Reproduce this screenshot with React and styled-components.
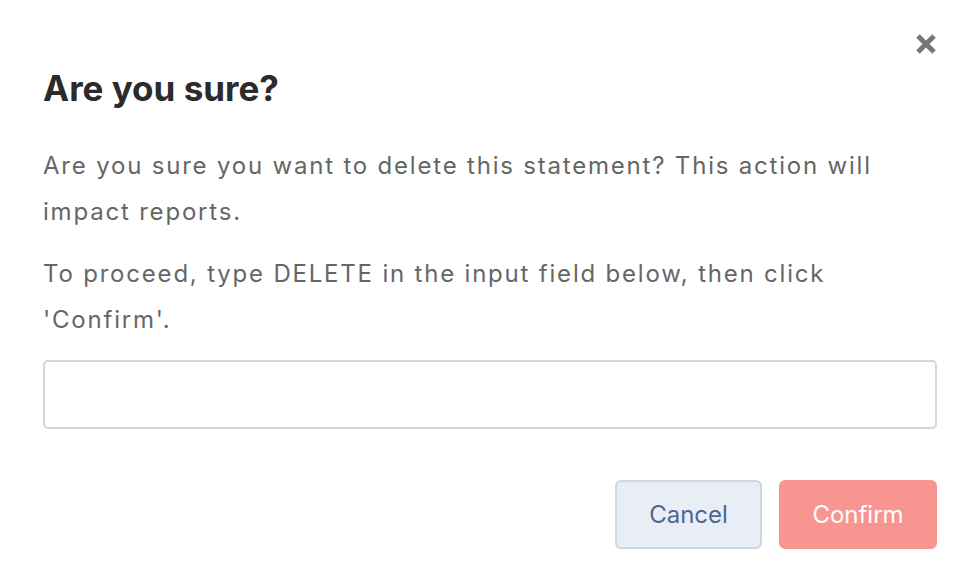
import React from "react"
import styled, { createGlobalStyle } from "styled-components"

const GlobalStyle = createGlobalStyle`
  html, body {
    margin: 0;
    padding: 0;
    background: #ffffff;
  }
  body {
    font-family: Inter, "Liberation Sans", Arial, sans-serif;
  }
  * {
    box-sizing: border-box;
  }
`

const Modal = styled.div`
  position: relative;
  width: 970px;
  height: 578px;
  padding: 66px 33px 0 43px;
  background: #ffffff;
`

const CloseButton = styled.button`
  position: absolute;
  top: 32px;
  right: 32px;
  width: 24px;
  height: 24px;
  padding: 0;
  border: none;
  background: transparent;
  cursor: pointer;
  display: flex;
  align-items: center;
  justify-content: center;
`

const Title = styled.h2`
  margin: 0 0 33px;
  font-size: 35px;
  line-height: 44px;
  font-weight: 700;
  color: #2b2b2b;
`

const Text = styled.p`
  margin: 0 0 16px;
  font-size: 24px;
  line-height: 46px;
  letter-spacing: 1.8px;
  color: #666666;
`

const Input = styled.input`
  display: block;
  width: 100%;
  height: 69px;
  margin-top: 17px;
  border: 2px solid #d6d6d6;
  border-radius: 5px;
  padding: 0 16px;
  font-size: 24px;
  font-family: inherit;
  outline: none;
`

const Actions = styled.div`
  display: flex;
  justify-content: flex-end;
  gap: 17px;
  margin-top: 51px;
`

const Button = styled.button`
  height: 69px;
  padding: 0;
  width: ${p => p.$width}px;
  border-radius: 6px;
  font-family: inherit;
  font-size: 24px;
  cursor: pointer;
  border: 2px solid ${p => (p.$primary ? "#f99590" : "#cdd7e3")};
  background: ${p => (p.$primary ? "#f99590" : "#e9eef6")};
  color: ${p => (p.$primary ? "#ffffff" : "#4b6891")};
`

const App = () => (
  <>
    <GlobalStyle />
    <Modal>
      <CloseButton aria-label="Close">
        <svg width="22" height="22" viewBox="0 0 22 22">
          <path
            d="M3 3 L19 19 M19 3 L3 19"
            stroke="#777777"
            strokeWidth="5"
            strokeLinecap="butt"
          />
        </svg>
      </CloseButton>
      <Title>Are you sure?</Title>
      <Text>
        Are you sure you want to delete this statement? This action will
        impact reports.
      </Text>
      <Text>
        To proceed, type DELETE in the input field below, then click
        'Confirm'.
      </Text>
      <Input type="text" />
      <Actions>
        <Button $width={147}>Cancel</Button>
        <Button $primary $width={158}>Confirm</Button>
      </Actions>
    </Modal>
  </>
)

export default App
